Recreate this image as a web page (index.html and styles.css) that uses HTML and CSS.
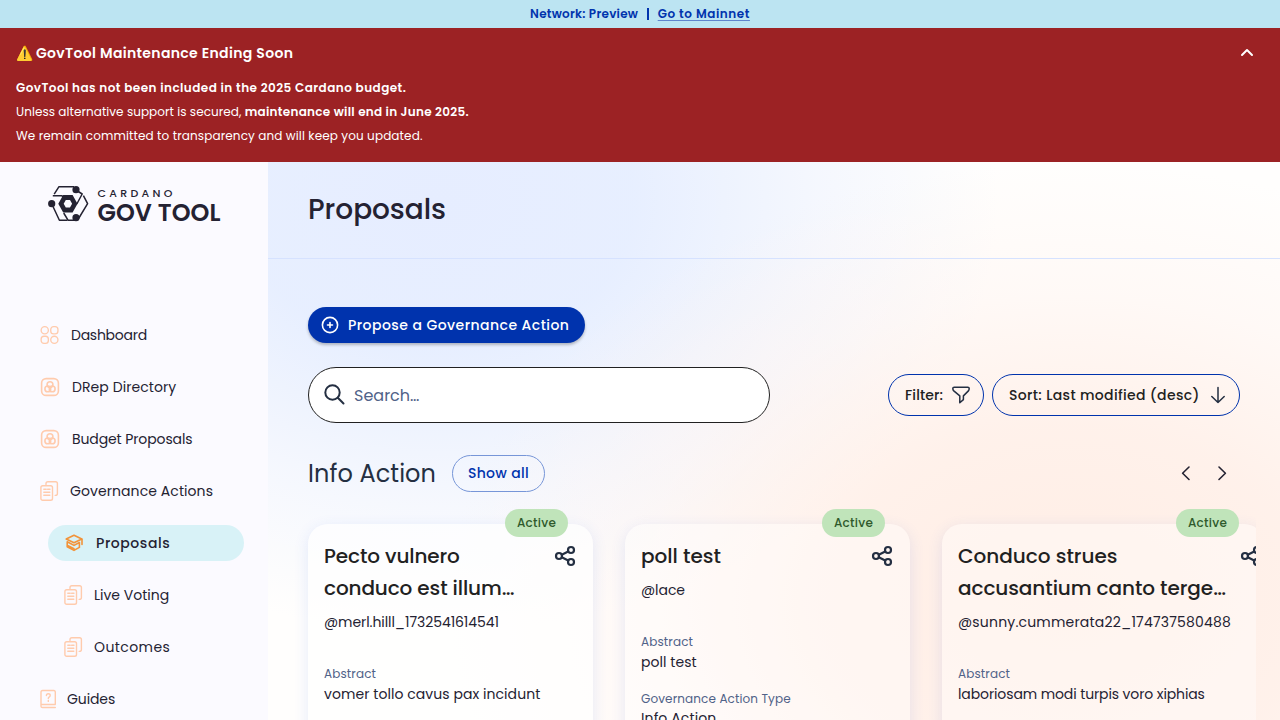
FILE: index.html
```html
<!DOCTYPE html>
<html lang="en">
<head>
<meta charset="utf-8">
<title>GovTool</title>
<link rel="stylesheet" href="styles.css">
</head>
<body>
<svg class="defs" aria-hidden="true">
  <symbol id="drep" viewBox="0 0 20 20"><rect x="1.600" y="1.600" width="16.800" height="16.800" rx="4.500"/><circle cx="10" cy="7.600" r="2.900"/><circle cx="7.800" cy="11.900" r="2.900"/><circle cx="12.200" cy="11.900" r="2.900"/></symbol>
  <symbol id="docs" viewBox="0 0 20 20"><path d="M6 3.500V2.600Q6 .8 7.800.8H15.600Q17.400.8 17.400 2.600V12.800Q17.400 14.400 15.200 14.400"/><rect x=".9" y="4.800" width="11.600" height="14.400" rx="1.800"/><path d="M3.800 8.200h2.400M7.600 8.200h2.400M3.800 11.200h6M3.800 14.200h6"/></symbol>
  <symbol id="share" viewBox="0 0 24 24"><circle cx="6" cy="12" r="3"/><circle cx="18" cy="6" r="3"/><circle cx="18" cy="18" r="3"/><path d="M8.800 10.700l6.400-3.200M8.800 13.300l6.400 3.200"/></symbol>
</svg>

<div class="network"><span class="net-name">Network: Preview</span><span class="net-sep"></span><a class="net-link">Go to Mainnet</a></div>

<section class="alert">
  <div class="alert-head">
    <span class="warn">⚠️</span>
    <h2>GovTool Maintenance Ending Soon</h2>
    <svg class="chev" viewBox="0 0 24 24"><path d="M7 14l5-5 5 5"/></svg>
  </div>
  <p><b class="ls-a">GovTool has not been included in the 2025 Cardano budget.</b></p>
  <p><span class="ls-r">Unless alternative support is secured, </span><b class="ls-c">maintenance will end in June 2025.</b></p>
  <p class="ls-m">We remain committed to transparency and will keep you updated.</p>
</section>

<div class="shell">
  <aside class="side">
    <div class="logo">
      <svg viewBox="0 0 42 38" width="42" height="38">
        <g fill="none" stroke="#242232" stroke-width="1.500" stroke-linecap="butt"><path d="M6.200 10.200 11 2.700H26"/><path d="M4.800 11.700H14l1 1.200"/><path d="M29.500 7 34.200 10 28.800 20"/><path d="M35.400 11.700 39.600 19.700 30.600 34.500"/><path d="M5 22.500 11.400 36.200H19.500"/><path d="M15.700 29 20 36.200H27"/></g>
        <g fill="#242232"><circle cx="28" cy="5.700" r="3.600"/><circle cx="3.700" cy="19.700" r="3.600"/><circle cx="28" cy="33.700" r="3.600"/><path fill-rule="evenodd" d="M15.200 11h9.400l4.900 8.700-4.900 8.700h-9.400l-4.900-8.700zM17.800 16l-2.100 3.700 2.100 3.700h4.200l2.100-3.700-2.100-3.700z"/></g>
      </svg>
      <div class="logo-text"><span class="l1">CARDANO</span><span class="l2">GOV TOOL</span></div>
    </div>
    <nav>
      <a class="item"><svg class="ic w19" viewBox="0 0 20 20"><circle cx="5" cy="5" r="3.800"/><rect x="11.300" y="1.200" width="7.600" height="7.600" rx="3"/><rect x="1.200" y="11.300" width="7.600" height="7.600" rx="3"/><circle cx="15.100" cy="15.100" r="3.800"/></svg><span class="ls-p g12">Dashboard</span></a>
      <a class="item"><svg class="ic bold"><use href="#drep"/></svg><span class="ls-b g12">DRep Directory</span></a>
      <a class="item"><svg class="ic bold"><use href="#drep"/></svg><span class="ls-n g12">Budget Proposals</span></a>
      <a class="item"><svg class="ic"><use href="#docs"/></svg><span class="ls-b g10">Governance Actions</span></a>
      <a class="item active"><svg class="cap" viewBox="0 0 20 20"><path d="M10 2.200 17.800 6 10 9.800 2.200 6z"/><path d="M3.200 8.800 10 12.400l5.400-2.900M3.200 8.800v4.900L10 17.400l5.400-3V9.500M3.600 12.400 10 15.600M18 6.200v5.200"/></svg><span class="ls-g g12">Proposals</span></a>
      <a class="item sub"><svg class="ic"><use href="#docs"/></svg><span class="g10">Live Voting</span></a>
      <a class="item sub"><svg class="ic"><use href="#docs"/></svg><span class="ls-h g10">Outcomes</span></a>
      <a class="item"><svg class="ic w17" viewBox="0 0 17 20"><path d="M15.300 15V3q0-1.500-1.500-1.500H2.500Q1 1.500 1 3v14.200q0 1.300 1.500 1.300H15.300M1.200 15.500H15.300"/><path d="M6.400 6.500q0-1.800 1.900-1.800t1.900 1.700q0 1-1.100 1.700-.8.500-.8 1.400M8.300 11.400v1"/></svg><span class="ls-n g10">Guides</span></a>
    </nav>
  </aside>

  <main>
    <header><h1>Proposals</h1></header>
    <div class="content">
      <button class="primary"><svg viewBox="0 0 20 20"><circle cx="10" cy="10" r="7.600"/><path d="M10 7.500v5M7.500 10h5"/></svg><span>Propose a Governance Action</span></button>
      <div class="tools">
        <div class="search"><svg viewBox="0 0 24 24"><circle cx="9.500" cy="9.500" r="7.200"/><path d="M14.800 14.800 20.500 20.500"/></svg><span>Search…</span></div>
        <div class="chips">
          <button class="chip filter"><span>Filter:</span><svg viewBox="0 0 20 20"><path d="M3.200 2.200H16.800Q18.200 2.200 18.200 3.500 18.200 5 17.400 5.900L12.400 10.900V14.600L8.800 17.800V10.900L2.800 5.900Q1.800 5 1.800 3.500 1.800 2.200 3.200 2.200Z"/></svg></button>
          <button class="chip sort"><span>Sort: Last modified (desc)</span><svg viewBox="0 0 20 20"><path d="M10 2.500v15M3.800 11.500l6.200 6 6.200-6"/></svg></button>
        </div>
      </div>
      <div class="row-head">
        <h2>Info Action</h2><button class="show">Show all</button>
        <div class="arrows"><svg viewBox="0 0 20 20"><path d="M13 3 6.600 9.200l6.400 6.300"/></svg><svg viewBox="0 0 20 20"><path d="M7 3 13.400 9.200l-6.400 6.300"/></svg></div>
      </div>
      <div class="cards">
        <article class="card">
          <span class="badge">Active</span>
          <div class="card-top"><h3><span class="ls-n">Pecto vulnero</span><br><span class="ls-n">conduco est illum…</span></h3><svg class="share"><use href="#share"/></svg></div>
          <p class="user ls-o">@merl.hilll_1732541614541</p>
          <p class="label">Abstract</p><p class="val">vomer tollo cavus pax incidunt</p>
        </article>
        <article class="card">
          <span class="badge">Active</span>
          <div class="card-top"><h3>poll test</h3><svg class="share"><use href="#share"/></svg></div>
          <p class="user ls-o">@lace</p>
          <p class="label">Abstract</p><p class="val">poll test</p>
          <p class="label second">Governance Action Type</p><p class="val ls-m type">Info Action</p>
        </article>
        <article class="card wide">
          <span class="badge">Active</span>
          <div class="card-top"><h3>Conduco strues<br><span class="ls-o">accusantium canto terge…</span></h3><svg class="share"><use href="#share"/></svg></div>
          <p class="user ls-f">@sunny.cummerata22_174737580488</p>
          <p class="label">Abstract</p><p class="val ls-n">laboriosam modi turpis voro xiphias</p>
        </article>
      </div>
    </div>
  </main>
</div>
</body>
</html>
```

FILE: styles.css
```css
*{box-sizing:border-box}
body{margin:0;height:720px;overflow:hidden;font-family:Poppins,Inter,sans-serif;color:#242232;font-size:14px;display:flex;flex-direction:column}
h1,h2,h3,p{margin:0}
button{font-family:inherit}
svg{fill:none;stroke-linecap:round;stroke-linejoin:round;flex:none}
.defs{position:absolute;width:0;height:0}

.ls-a{letter-spacing:.45px}
.ls-b{letter-spacing:.08px}
.ls-c{letter-spacing:.29px}
.ls-f{letter-spacing:.19px}
.ls-g{letter-spacing:.56px}
.ls-h{letter-spacing:.41px}
.ls-m,.val.ls-m{letter-spacing:.12px}
.ls-n,.val.ls-n{letter-spacing:-.11px}
.ls-o{letter-spacing:-.07px}
.ls-p{letter-spacing:-.26px}
.ls-r{letter-spacing:.06px}

.network{height:28px;flex:none;background:#bce4f2;color:#0033ad;display:flex;justify-content:center;align-items:center;font-size:12px;font-weight:600}
.net-name{letter-spacing:.25px}
.net-sep{width:1.500px;height:12px;background:#0033ad;margin:0 9px}
.net-link{letter-spacing:.55px;text-decoration:underline;text-decoration-thickness:1px;text-underline-offset:2px;text-decoration-color:#5f83cc}

.alert{height:134px;flex:none;background:#9c2224;color:#fff;padding:13px 16px 0;font-size:12px;line-height:24px}
.alert b{font-weight:600}
.alert-head{display:flex;align-items:center;height:24px;margin-bottom:11px}
.alert-head h2{font-size:14px;font-weight:600;letter-spacing:.34px;margin-left:3px;flex:1}
.warn{width:17px;font-size:14px;font-weight:600;white-space:nowrap}
.chev{width:24px;height:24px;margin-right:5px;stroke:#fff;stroke-width:2}

.shell{flex:1;display:flex;min-height:0}
.side{width:268px;flex:none;background:#fbfaff;padding-top:22px}
.logo{display:flex;margin-left:48px;height:38px}
.logo-text{display:flex;flex-direction:column;margin-left:7.500px;padding-top:1px;white-space:nowrap}
.l1{font-size:11px;line-height:16px;font-weight:500;letter-spacing:3.300px}
.l2{font-size:24px;line-height:24px;font-weight:600;letter-spacing:.05px}
nav{display:flex;flex-direction:column;gap:16px;padding:95px 24px 0 24px}
.item{height:36px;flex:none;display:flex;align-items:center;padding-left:16px;white-space:nowrap}
.item.sub{padding-left:40px}
.item.active{margin-left:24px;border-radius:18px;background:#d8f2f7;font-weight:500}
.ic{width:20px;height:20px;stroke:#ffcbad;stroke-width:1.400}
.bold{stroke-width:1.600}
.w19{width:19px}
.w17{width:17px}
.cap{width:20px;height:20px;stroke:#f29339;stroke-width:1.600}
.g12{margin-left:12px}
.g10{margin-left:10px}

main{flex:1;min-width:0;display:flex;flex-direction:column;background:radial-gradient(ellipse 620px 440px at 800px 440px,#ffede4 0%,rgba(255,238,230,.8) 40%,rgba(255,240,234,.35) 70%,rgba(255,244,240,0) 100%),radial-gradient(ellipse 560px 430px at 170px 40px,#e6edff 0%,rgba(230,238,255,.95) 35%,rgba(235,241,255,.5) 68%,rgba(240,245,255,0) 100%),#fffefd}
header{height:97px;flex:none;border-bottom:1px solid #d6e2ff;padding-left:40px;display:flex;align-items:center}
h1{font-size:28px;line-height:40px;font-weight:500;letter-spacing:-.05px}
.content{padding:48px 24px 0 0;margin-left:40px;display:flex;flex-direction:column;min-height:0;flex:1}
.primary{align-self:flex-start;width:277px;height:36px;flex:none;border:0;border-radius:18px;background:#0033ad;color:#fff;font-size:14px;font-weight:500;letter-spacing:.45px;display:flex;align-items:center;gap:8px;padding:0 0 0 12px;white-space:nowrap;box-shadow:0 2px 3px rgba(0,0,0,.25)}
.primary svg{width:20px;height:20px;stroke:#fff;stroke-width:1.600}
.tools{margin:24px 16px 0 0;height:56px;flex:none;display:flex;justify-content:space-between;align-items:center}
.search{width:462px;height:56px;border:1px solid #212121;border-radius:28px;background:#fff;display:flex;align-items:center;padding-left:14px;gap:7px;font-size:16px;color:#506288}
.search svg{width:24px;height:24px;stroke:#242f42;stroke-width:2}
.chips{display:flex;gap:8px}
.chip{height:42px;border:1px solid #0033ad;border-radius:21px;background:none;color:#212121;font-size:14px;font-weight:500;display:flex;align-items:center;padding:0 0 0 16px;white-space:nowrap}
.chip span{line-height:22px}
.chip svg{width:20px;height:20px;stroke:#242f42;stroke-width:1.500}
.filter{width:96px;letter-spacing:.11px;gap:8px}
.sort{width:248px;letter-spacing:.35px;gap:8px}
.row-head{height:37px;flex:none;margin:32px 18px 0 0;display:flex;align-items:center}
.row-head h2{font-size:24px;font-weight:400;letter-spacing:.09px;color:#242f42;width:144px;white-space:nowrap}
.show{width:93px;height:37px;border:1px solid #7796d8;border-radius:19px;background:none;color:#0033ad;font-size:14px;font-weight:500;letter-spacing:.33px;padding:0}
.arrows{margin-left:auto;display:flex;gap:16px;padding-right:6px}
.arrows svg{width:20px;height:20px;stroke:#242232;stroke-width:1.600}
.cards{flex:1;min-height:0;display:flex;gap:32px;padding-top:32px;margin-left:-20px;padding-left:20px;overflow:hidden}
.card{width:285px;height:420px;flex:none;border-radius:20px;padding:16px 16px 0;background:rgba(255,255,255,.4);box-shadow:0 4px 15px rgba(47,98,220,.12);position:relative;white-space:nowrap}
.card:first-child{background:rgba(255,255,255,.65)}
.card.wide{width:322px}
.badge{position:absolute;right:25px;top:-15px;width:63px;height:28px;border-radius:14px;background:#c0e4ba;color:#2f5a2c;font-size:12px;font-weight:500;letter-spacing:.27px;line-height:28px;text-align:center}
.card-top{display:flex;justify-content:space-between}
.wide .card-top{margin-right:-15px}
h3{font-size:20px;line-height:32px;font-weight:500;color:#212121}
.share{width:24px;height:24px;margin-top:4px;stroke:#242f42;stroke-width:2.200}
.user{line-height:20px;margin-top:8px}
.label{font-size:12px;line-height:16px;margin-top:34px;color:#506288;letter-spacing:.12px}
.val{line-height:20px;margin-top:2px;letter-spacing:.06px}
.label.second{margin-top:19px}
.val.type{margin-top:1px}
```
